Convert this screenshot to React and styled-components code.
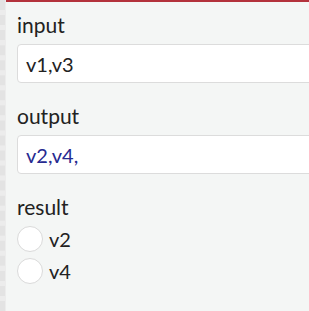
import styled, { createGlobalStyle } from "styled-components";

const GlobalStyle = createGlobalStyle`
  html, body {
    margin: 0;
    padding: 0;
    overflow: hidden;
    background: #f4f6f5;
  }
  body {
    font-family: Lato, "Open Sans", sans-serif;
  }
`;

const Page = styled.div`
  display: flex;
  height: 311px;
  background: #eeeeee;
`;

const Gutter = styled.div`
  width: 1px;
  border-left: 5px dashed #e3e3e3;
  background: #ececec;
`;

const Panel = styled.div`
  flex: 1;
  border-top: 2px solid #b3323c;
  background: #f4f6f5;
  padding: 11px 0 0 11px;
  box-sizing: border-box;
  overflow: hidden;
`;

const Field = styled.div`
  display: flex;
  flex-direction: column;
  gap: 7px;
  margin-bottom: 21px;
`;

const Label = styled.div`
  font-size: 21px;
  line-height: 24px;
  color: #222;
`;

const Box = styled.div`
  width: 320px;
  height: 39px;
  box-sizing: border-box;
  background: #fff;
  border: 1px solid #dcdcdc;
  border-radius: 4px;
  padding: 0 8px;
  display: flex;
  align-items: center;
  font-size: 20px;
  color: ${(p) => (p.$out ? "#262a90" : "#222")};
`;

const Options = styled.div`
  display: flex;
  flex-direction: column;
  gap: 6px;
`;

const Option = styled.label`
  display: flex;
  align-items: center;
  gap: 6px;
  font-size: 20px;
  color: #222;
`;

const Radio = styled.span`
  width: 26px;
  height: 26px;
  box-sizing: border-box;
  border-radius: 50%;
  border: 1px solid #dadada;
  background: #fff;
`;

export default function App() {
  return (
    <>
      <GlobalStyle />
      <Page>
        <Gutter />
        <Panel>
          <Field>
            <Label>input</Label>
            <Box>v1,v3</Box>
          </Field>
          <Field>
            <Label>output</Label>
            <Box $out>v2,v4,</Box>
          </Field>
          <Field>
            <Label>result</Label>
            <Options>
              {["v2", "v4"].map((v) => (
                <Option key={v}>
                  <Radio />
                  {v}
                </Option>
              ))}
            </Options>
          </Field>
        </Panel>
      </Page>
    </>
  );
}
